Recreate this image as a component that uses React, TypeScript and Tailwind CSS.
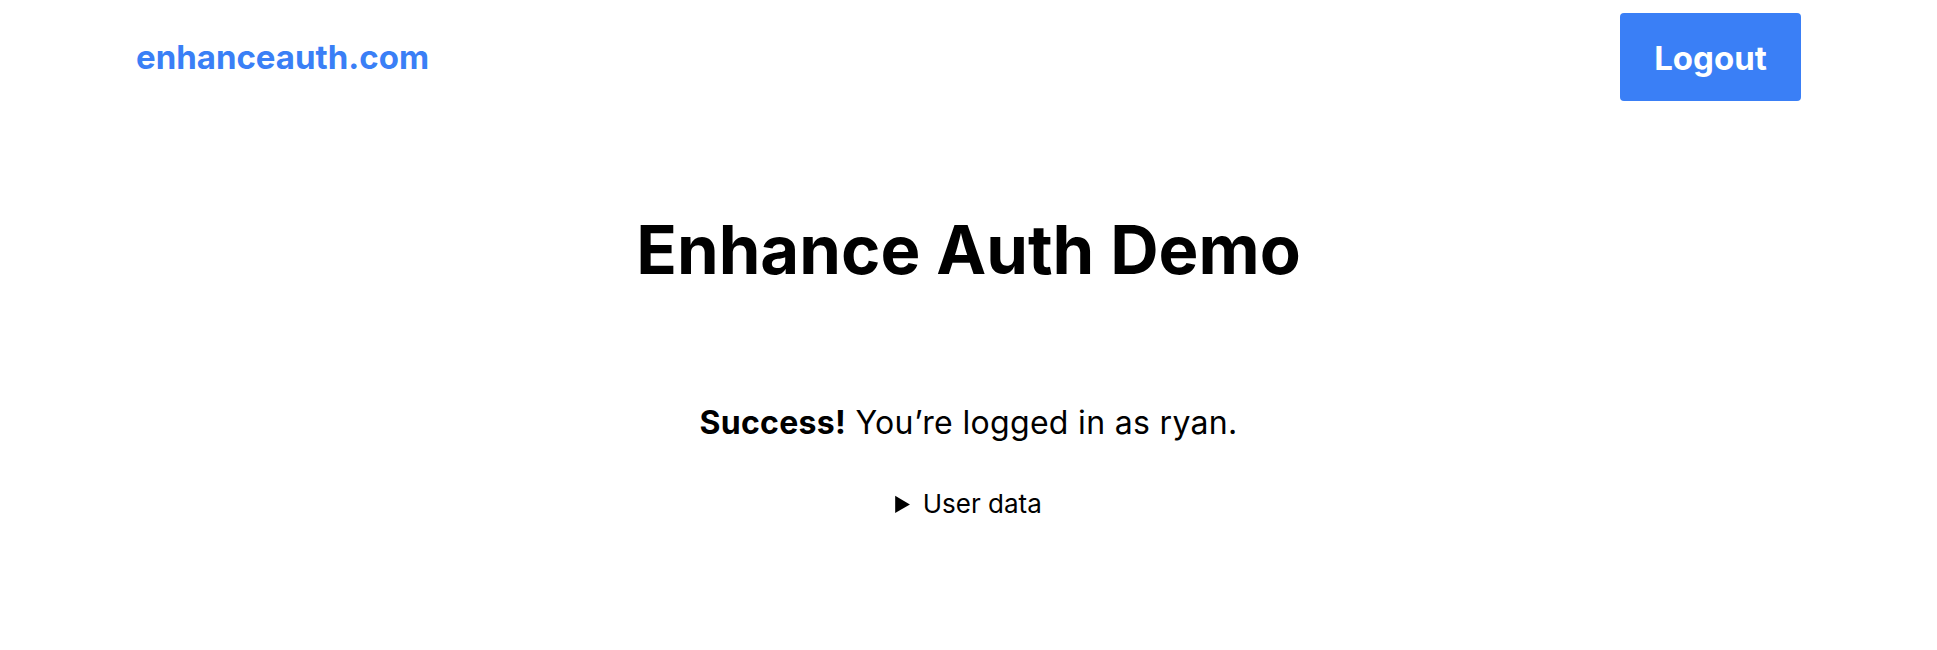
import React from 'react';

const App: React.FC = () => {
  return (
    <div className="min-h-screen bg-white text-black" style={{ fontFamily: 'Inter, "Noto Sans", sans-serif' }}>
      <header className="flex items-center justify-between px-[136px] pt-[13px]">
        <a href="#" className="text-[33px] font-bold text-[#3a7ff6] mt-[2px]">
          enhanceauth.com
        </a>
        <button className="h-[88px] w-[181px] rounded-[4px] bg-[#3a7ff6] pt-[3px] text-[33px] font-bold text-white">
          Logout
        </button>
      </header>

      <main className="flex flex-col items-center">
        <h1 className="mt-[115px] text-[67px] font-bold leading-none">Enhance Auth Demo</h1>

        <p className="mt-[124px] text-[32px] leading-none tracking-[0.01em]">
          <strong className="font-bold">Success!</strong> You’re logged in as ryan.
        </p>

        <details className="mt-[45px] text-[26px]">
          <summary className="cursor-pointer">User data</summary>
        </details>
      </main>
    </div>
  );
};

export default App;
